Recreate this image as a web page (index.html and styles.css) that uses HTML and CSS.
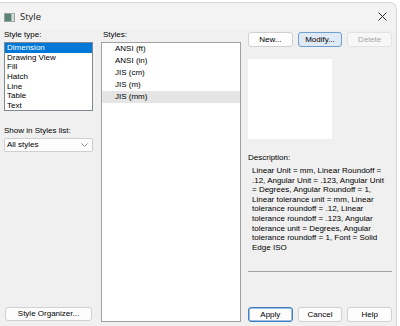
FILE: index.html
```html
<!DOCTYPE html>
<html>
<head>
<meta charset="utf-8">
<link rel="stylesheet" href="styles.css">
</head>
<body>
<div class="window">
  <div class="titlebar">
    <svg class="app-icon" width="11" height="9" viewBox="0 0 11 9">
      <rect x="0.5" y="0.5" width="10" height="8" fill="#eef1f0" stroke="#9aa5a2"/>
      <rect x="1" y="1" width="6.5" height="7" fill="#5a8479"/>
      <rect x="8.5" y="2" width="1" height="5" fill="#a9bbb6"/>
    </svg>
    <span class="title">Style</span>
    <svg class="close" width="9" height="9" viewBox="0 0 9 9">
      <path d="M0.5 0.5 L8.5 8.5 M8.5 0.5 L0.5 8.5" stroke="#2b2b2b" stroke-width="1"/>
    </svg>
  </div>
  <div class="body">
    <div class="col-left">
      <div class="label">Style type:</div>
      <div class="typelist">
        <div class="titem selected">Dimension</div>
        <div class="titem">Drawing View</div>
        <div class="titem">Fill</div>
        <div class="titem">Hatch</div>
        <div class="titem">Line</div>
        <div class="titem">Table</div>
        <div class="titem">Text</div>
      </div>
      <div class="label label-show">Show in Styles list:</div>
      <div class="combo">
        <span>All styles</span>
        <svg class="chev" width="7" height="4" viewBox="0 0 7 4"><path d="M0.5 0.5 L3.5 3.5 L6.5 0.5" fill="none" stroke="#7a7a7a" stroke-width="0.9"/></svg>
      </div>
      <div class="btn btn-organizer">Style Organizer...</div>
    </div>
    <div class="col-mid">
      <div class="label label-styles">Styles:</div>
      <div class="stylelist">
        <div class="sitem">ANSI (ft)</div>
        <div class="sitem">ANSI (in)</div>
        <div class="sitem">JIS (cm)</div>
        <div class="sitem">JIS (m)</div>
        <div class="sitem hover">JIS (mm)</div>
      </div>
    </div>
    <div class="col-right">
      <div class="btnrow">
        <div class="btn">New...</div>
        <div class="btn btn-active">Modify...</div>
        <div class="btn btn-disabled">Delete</div>
      </div>
      <div class="preview"></div>
      <div class="label label-desc">Description:</div>
      <div class="desc">
        <div>Linear Unit = mm, Linear Roundoff =</div>
        <div>.12, Angular Unit = .123, Angular Unit</div>
        <div>= Degrees, Angular Roundoff = 1,</div>
        <div>Linear tolerance unit = mm, Linear</div>
        <div>tolerance roundoff = .12, Linear</div>
        <div>tolerance roundoff = .123, Angular</div>
        <div>tolerance unit = Degrees, Angular</div>
        <div>tolerance roundoff = 1, Font = Solid</div>
        <div>Edge ISO</div>
      </div>
      <div class="btnrow btnrow-bottom">
        <div class="btn btn-default">Apply</div>
        <div class="btn">Cancel</div>
        <div class="btn">Help</div>
      </div>
    </div>
  </div>
</div>
</body>
</html>
```

FILE: styles.css
```css
html, body {
  margin: 0;
  padding: 0;
  background: #ffffff;
}
body {
  width: 400px;
  height: 326px;
  overflow: hidden;
  font-family: "Liberation Sans", Arial, sans-serif;
  font-size: 8px;
  color: #000;
}
.window {
  margin-top: 2px;
  width: 397px;
  height: 324px;
  background: #f0f0f0;
  border-top: 1px solid #d6d6d6;
  border-right: 1px solid #d6d6d6;
  border-top-right-radius: 7px;
  box-sizing: border-box;
  display: flex;
  flex-direction: column;
}
.titlebar {
  height: 27px;
  flex: none;
  display: flex;
  align-items: center;
  background: #f3f3f3;
  border-top-right-radius: 7px;
  padding-left: 4px;
  padding-right: 9px;
}
.app-icon {
  flex: none;
  margin-top: 1px;
}
.title {
  margin-left: 5px;
  font-family: "Open Sans", "Noto Sans", sans-serif;
  font-size: 9.5px;
  color: #1a1a1a;
}
.close {
  margin-left: auto;
  margin-top: -1px;
}
.body {
  flex: 1;
  display: flex;
  padding: 0 0 4px 4px;
  line-height: 10px;
}
.label {
  height: 10px;
  line-height: 10px;
  white-space: nowrap;
}
.col-left {
  width: 89px;
  display: flex;
  flex-direction: column;
}
.typelist {
  margin-top: 2px;
  height: 69px;
  box-sizing: border-box;
  border: 1px solid #828790;
  background: #fff;
  overflow: hidden;
}
.titem {
  height: 9.7px;
  line-height: 9.7px;
  padding-left: 2px;
  white-space: nowrap;
}
.titem.selected {
  background: #0078d7;
  color: #fff;
}
.label-show {
  margin-top: 15px;
}
.combo {
  margin-top: 2px;
  height: 14px;
  box-sizing: border-box;
  border: 1px solid #cfcfcf;
  border-radius: 2px;
  background: #fdfdfd;
  display: flex;
  align-items: center;
  padding: 0 4px 0 2px;
  justify-content: space-between;
}
.btn {
  width: 45px;
  height: 15px;
  box-sizing: border-box;
  border: 1px solid #d0d0d0;
  border-radius: 3px;
  background: #fdfdfd;
  display: flex;
  align-items: center;
  justify-content: center;
  white-space: nowrap;
}
.btn-organizer {
  width: 87px;
  height: 14px;
  margin-top: auto;
  margin-left: 1px;
  margin-bottom: 1px;
}
.col-mid {
  width: 140px;
  margin-left: 8px;
  display: flex;
  flex-direction: column;
}
.label-styles {
  padding-left: 2px;
}
.stylelist {
  margin-top: 2px;
  flex: 1;
  border: 1px solid #a0a0a0;
  background: #fff;
}
.sitem {
  height: 12px;
  line-height: 12px;
  padding-left: 13px;
  white-space: nowrap;
}
.sitem.hover {
  background: #e5e5e5;
}
.col-right {
  width: 144px;
  margin-left: 7px;
  display: flex;
  flex-direction: column;
}
.btnrow {
  margin-top: 2px;
  display: flex;
  gap: 5px;
}
.btn-active {
  background: #dfeaf6;
  border-color: #6d9fcf;
}
.btn-disabled {
  color: #a6a6a6;
  border-color: #e3e3e3;
  background: #f7f7f7;
}
.btn-default {
  border-color: #3d7fc2;
  box-shadow: inset 0 0 0 0.5px #3d7fc2;
}
.preview {
  margin-top: 12px;
  width: 84px;
  height: 80px;
  background: #fff;
}
.label-desc {
  margin-top: 14px;
}
.desc {
  margin-top: 2px;
  height: 107px;
  box-sizing: border-box;
  padding: 1px 0 0 4px;
  border-bottom: 1px solid #a0a0a0;
  line-height: 9.6px;
  white-space: nowrap;
}
.btnrow-bottom {
  margin-top: auto;
  margin-bottom: 0;
}
```
